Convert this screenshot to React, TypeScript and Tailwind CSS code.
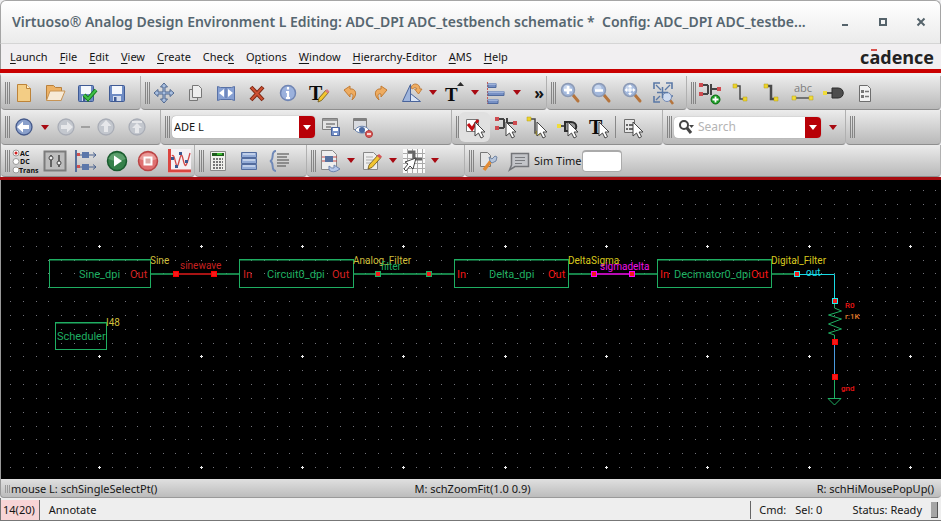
import type { ReactNode } from "react";

const menus = [
  { label: "Launch", key: 0 },
  { label: "File", key: 0 },
  { label: "Edit", key: 0 },
  { label: "View", key: 0 },
  { label: "Create", key: 0 },
  { label: "Check", key: 4 },
  { label: "Options", key: 1 },
  { label: "Window", key: 0 },
  { label: "Hierarchy-Editor", key: 0 },
  { label: "AMS", key: 0 },
  { label: "Help", key: 0 },
];

/* ---------- icon drawings, all on a 24 x 24 grid ---------- */

const Cursor = () => (
  <path d="M12 7v14l3.5-3 2.5 5 2.5-1.3-2.4-4.7H22z" fill="#fff" stroke="#444" strokeWidth="1" />
);

const Lens = ({ children }: { children?: ReactNode }) => (
  <>
    <path d="M15 14l5 6" stroke="#b5743c" strokeWidth="3" strokeLinecap="round" />
    <circle cx="10" cy="9" r="6.5" fill="#a3b8dc" stroke="#8c9ab5" strokeWidth="1.5" />
    <circle cx="9" cy="7.5" r="3.5" fill="#c9d7ee" />
    {children}
  </>
);

const Floppy = () => (
  <>
    <rect x="4.5" y="4.5" width="15" height="16" rx="1" fill="#6f8cc4" stroke="#3f5a94" />
    <rect x="7" y="5" width="10" height="8" fill="#f4f7fc" />
    <rect x="8" y="15" width="8" height="5" fill="#d5deee" />
    <rect x="9" y="16" width="2.5" height="4" fill="#3f5a94" />
  </>
);

const Transistor = () => (
  <>
    <path d="M3 4h7M3 13h7M10 4v9M13 3v11M13 8h8" stroke="#444" strokeWidth="2" fill="none" />
    <path d="M1 2h4v4H1zM1 11h4v4H1zM19 6h4v4h-4z" fill="#cf4b50" />
  </>
);

const Wire = ({ width = 1.5 }: { width?: number }) => (
  <>
    <path d="M6 5h5v13h5" stroke="#4a4a4a" strokeWidth={width} fill="none" />
    <path d="M4 3h4v4H4zM14 16h4v4h-4z" fill="#ecd32d" stroke="#b59c1a" strokeWidth=".5" />
  </>
);

const ListDoc = () => (
  <>
    <path d="M6.5 4.5h8l3 3v13h-11z" fill="#f2f2f2" stroke="#6d6d6d" />
    <path d="M8 9h3v3H8zM8 14h3v3H8z" fill="#777" />
    <path d="M12 10.5h4M12 15.5h4" stroke="#777" strokeWidth="1.5" />
  </>
);

const BigT = ({ x = 3 }: { x?: number }) => (
  <text x={x} y="19" fontSize="20" fontWeight="bold" fontFamily="Liberation Serif, serif" fill="#0a0a0a">
    T
  </text>
);

const Round = ({ pale, children }: { pale?: boolean; children: ReactNode }) => (
  <>
    <circle cx="12" cy="12" r="8" fill={pale ? "#c3c7ce" : "#8aa0cb"} stroke={pale ? "#a9adb6" : "#45598a"} strokeWidth="1.3" />
    {children}
  </>
);

const icons: Record<string, ReactNode> = {
  new: (
    <>
      <path d="M5.5 3.5h9l4 4v13h-13z" fill="#f3cd85" stroke="#bd8338" />
      <path d="M14.5 3.5v4h4" fill="#fff0cb" stroke="#bd8338" />
    </>
  ),
  open: (
    <>
      <path d="M3.5 19V4.5h7l2 2h6V19z" fill="#edb265" stroke="#b9803c" />
      <path d="M7 10h15l-4 9.5H3.5z" fill="#f7ead6" stroke="#c79455" />
    </>
  ),
  check: (
    <>
      <Floppy />
      <path d="M10 14l4 4 8-9" stroke="#167c1c" strokeWidth="4" fill="none" />
      <path d="M10 14l4 4 8-9" stroke="#3fc048" strokeWidth="2" fill="none" />
    </>
  ),
  save: <Floppy />,
  move: (
    <path
      d="M12 2l3.5 4H13v5h5V8.5l4 3.5-4 3.5V13h-5v5h2.5L12 22l-3.5-4H11v-5H6v2.5L2 12l4-3.5V11h5V6H8.5z"
      fill="#a9bfdf"
      stroke="#4f678f"
    />
  ),
  copy: (
    <>
      <path d="M6.5 8.5h8v11h-8z" fill="#ddd" stroke="#777" />
      <path d="M9.5 4.5h6l3 3v9h-9z" fill="#eee" stroke="#777" />
    </>
  ),
  stretch: (
    <>
      <path d="M3.5 5.5l3 1h11l3-1v14l-3-1h-11l-3 1z" fill="#87a0d2" stroke="#5871a6" />
      <path d="M12 7v10" stroke="#5871a6" />
      <path d="M5 12l5-4v8zM19 12l-5-4v8z" fill="#fff" />
    </>
  ),
  delete: (
    <>
      <path d="M6 6l12 13M18 6L6 19" stroke="#7c2510" strokeWidth="4" />
      <path d="M6.5 6.5l11 12M17.5 6.5l-11 12" stroke="#cd5032" strokeWidth="2" />
    </>
  ),
  info: (
    <>
      <circle cx="12" cy="12" r="7.5" fill="#9bb1dc" stroke="#7085b3" strokeWidth="1.5" />
      <path d="M12 6v2.5M10 11h2v6M10 17h4" stroke="#fff" strokeWidth="2.2" fill="none" />
    </>
  ),
  textEdit: (
    <>
      <BigT x={2} />
      <path d="M11 21l1-4 7-8 2.5 2.5-7 8z" fill="#f3c62e" stroke="#6b5314" strokeWidth=".8" />
      <path d="M18 10l2-2 2.5 2.5-2 2z" fill="#d87d80" />
    </>
  ),
  undo: <path d="M6 9l6-4v3c6-1 8 6 2 11 2-5 1-7-2-6v3z" fill="#eeac61" stroke="#c27b32" />,
  redo: <path d="M18 9l-6-4v3c-6-1-8 6-2 11-2-5-1-7 2-6v3z" fill="#eeac61" stroke="#c27b32" />,
  rotate: (
    <>
      <path d="M10.5 3.5v17h-8z" fill="#9fb5dc" stroke="#48639a" />
      <path d="M10.5 12.5l10 8h-10z" fill="#d9e4f5" stroke="#48639a" />
      <path d="M11 7c1-6 9-5 9 1h2l-3.5 5-4-5H17c-1-2-3-2-4 0z" fill="#efad62" stroke="#b97430" strokeWidth=".8" />
    </>
  ),
  textUp: (
    <>
      <text x="3" y="20" fontSize="19" fontWeight="bold" fontFamily="Liberation Serif, serif" fill="#0a0a0a">
        T
      </text>
      <path d="M15 5l3.5-4L22 5z" fill="#2b2b2b" />
    </>
  ),
  align: (
    <>
      <path d="M3.5 1v22" stroke="#c95a55" strokeDasharray="2 1" />
      <path d="M4 2.5h8v4H4zM4 10.5h16v4H4zM4 18.5h10v4H4z" fill="#7790c4" stroke="#4f6a9e" />
      <path d="M4 3h8M4 11h16M4 19h10" stroke="#c6d4ef" />
    </>
  ),
  zoomIn: (
    <Lens>
      <path d="M10 5v8M6 9h8" stroke="#fff" strokeWidth="2.5" />
    </Lens>
  ),
  zoomOut: (
    <Lens>
      <path d="M6 9.5h8" stroke="#fff" strokeWidth="2.5" />
    </Lens>
  ),
  zoomFit: (
    <Lens>
      <path d="M10 3.5l2 2.5h-4zM10 14.5l2-2.5h-4zM4.5 9l2.5-2v4zM15.5 9l-2.5-2v4z" fill="#fff" />
      <path d="M10 5v8M6 9h8" stroke="#fff" />
    </Lens>
  ),
  zoomSel: (
    <>
      <path d="M3 8V2h6M15 2h6v6M3 15v6h6M21 14v2" stroke="#5a78a6" strokeWidth="1.6" fill="none" />
      <path d="M5 4l5 5M19 4l-5 5M5 19l4-4" stroke="#5a78a6" strokeWidth="1.3" />
      <path d="M19 19l3 4" stroke="#b5743c" strokeWidth="2.5" />
      <circle cx="16" cy="16" r="4.5" fill="#d0dcf0" stroke="#7389b3" />
      <path d="M11.5 6v11M6 11.5h11" stroke="#5a78a6" strokeWidth="1.5" />
    </>
  ),
  instance: (
    <>
      <Transistor />
      <circle cx="17.5" cy="18.5" r="4.5" fill="#199b22" stroke="#0c6d14" />
      <path d="M17.5 15.5v6M14.5 18.5h6" stroke="#fff" strokeWidth="1.8" />
    </>
  ),
  wire: <Wire />,
  wideWire: <Wire width={2.5} />,
  label: (
    <>
      <text x="3" y="11" fontSize="11" fontFamily="Open Sans, sans-serif" fill="#7d7d7d">
        abc
      </text>
      <path d="M4 17h16" stroke="#555" strokeWidth="1.5" />
      <path d="M1 15h4v4H1zM18 15h4v4h-4z" fill="#f0dc3a" stroke="#b59c1a" strokeWidth=".5" />
    </>
  ),
  pin: (
    <>
      <path d="M4 12h8" stroke="#555" strokeWidth="2" />
      <path d="M10 7h6c7 0 7 10 0 10h-6z" fill="#4d4d4d" stroke="#2c2c2c" />
      <path d="M1 10h4v4H1z" fill="#f0dc3a" />
    </>
  ),
  list: <ListDoc />,
  back: (
    <Round>
      <path d="M5 12l6-5.5v3.5h6v4h-6v3.5z" fill="#fff" />
    </Round>
  ),
  forward: (
    <Round pale>
      <path d="M19 12l-6-5.5v3.5H7v4h6v3.5z" fill="#e6e7ea" />
    </Round>
  ),
  up: (
    <Round pale>
      <path d="M12 5l5.5 6H14v6h-4v-6H6.5z" fill="#e6e7ea" />
    </Round>
  ),
  top: (
    <Round pale>
      <path d="M7 6h10v2H7zM12 8l5 5h-3v5h-4v-5H7z" fill="#e6e7ea" />
    </Round>
  ),
  saveState: (
    <>
      <path d="M3.5 3.5h15v11h-15z" fill="#e3e3e3" stroke="#808080" />
      <path d="M4 5h14M7 9h9M7 12h5" stroke="#808080" strokeWidth="1.5" />
      <path d="M12.5 12.5h8v8h-8z" fill="#7893ca" stroke="#4b659c" />
      <path d="M14 13h5v3h-5zM15 18h3v2h-3z" fill="#fff" />
    </>
  ),
  viewState: (
    <>
      <path d="M3.5 3.5h13v11h-13z" fill="#d9dbe0" stroke="#808080" />
      <path d="M4 5h12" stroke="#808080" strokeWidth="2" />
      <path d="M5 15c3-5 11-5 14 0-3 4-11 4-14 0z" fill="#fff" stroke="#6680ad" />
      <circle cx="12" cy="15" r="3" fill="#4b6ba3" />
      <circle cx="19" cy="19" r="3.5" fill="#da5856" stroke="#b13b3b" />
      <path d="M17 19h4" stroke="#fff" strokeWidth="1.5" />
    </>
  ),
  select: (
    <>
      <path d="M3.5 4.5h12v12h-12z" fill="#fff" stroke="#777" />
      <path d="M5 9l4 5 6-9" stroke="#c40d12" strokeWidth="3" fill="none" />
      <Cursor />
    </>
  ),
  selInstance: (
    <>
      <Transistor />
      <Cursor />
    </>
  ),
  selWire: (
    <>
      <path d="M4 4h6v14h6" stroke="#4a4a4a" strokeWidth="1.5" fill="none" />
      <path d="M2 2h4v4H2zM11 16h4v4h-4z" fill="#ecd32d" stroke="#b59c1a" strokeWidth=".5" />
      <Cursor />
    </>
  ),
  selPin: (
    <>
      <path d="M4 11h6" stroke="#555" strokeWidth="2" />
      <path d="M9 7h6c7 0 7 9 0 9H9z" fill="#9a9a9a" stroke="#2c2c2c" strokeWidth="2" />
      <path d="M1 9h4v4H1z" fill="#f0dc3a" />
      <Cursor />
    </>
  ),
  selText: (
    <>
      <BigT x={2} />
      <Cursor />
    </>
  ),
  selList: (
    <>
      <path d="M3.5 4.5h10v13h-10z" fill="#e7e7e7" stroke="#6d6d6d" />
      <path d="M5 9h2v2H5zM5 13h2v2H5zM8 9h4v2H8zM8 13h4v2H8z" fill="#666" />
      <Cursor />
    </>
  ),
  analyses: (
    <>
      <circle cx="4" cy="4" r="3" fill="#fff" stroke="#999" />
      <circle cx="4" cy="4" r="1.5" fill="#d01e1e" />
      <circle cx="4" cy="12.5" r="3" fill="#fff" stroke="#999" />
      <circle cx="4" cy="21" r="3" fill="#fff" stroke="#999" />
      <g fontSize="7" fontWeight="bold" fontFamily="Open Sans, sans-serif" fill="#111">
        <text x="8" y="6.5">AC</text>
        <text x="8" y="15">DC</text>
        <text x="7" y="23.5">Trans</text>
      </g>
    </>
  ),
  variables: (
    <>
      <path d="M1.5 2.5h21v19h-21z" fill="#bdbdbd" stroke="#7c7c7c" strokeWidth="2" />
      <path d="M8 6v12M16 6v12" stroke="#444" strokeWidth="1.5" />
      <circle cx="8" cy="9" r="2" fill="#eee" stroke="#444" />
      <circle cx="16" cy="14" r="2" fill="#eee" stroke="#444" />
    </>
  ),
  outputs: (
    <>
      <path d="M2 1v22" stroke="#566f9b" strokeWidth="2" />
      <path d="M2 6h20M2 18h20M19 3.5l3 2.5-3 2.5M19 15.5l3 2.5-3 2.5" stroke="#49618e" fill="none" />
      <path d="M8 3h7v6H8zM8 15h7v6H8z" fill="#5b77aa" />
      <path d="M3 4h3v3H3zM3 16h3v3H3z" fill="#cf4f4f" />
    </>
  ),
  run: (
    <>
      <circle cx="12" cy="12" r="9.5" fill="#358049" stroke="#195b2e" strokeWidth="1.5" />
      <path d="M3.5 10a9 9 0 0117 0q-8 4-17 0z" fill="#5c9f6d" />
      <path d="M9 6.5l8 5.5-8 5.5z" fill="#fff" />
    </>
  ),
  stop: (
    <>
      <circle cx="12" cy="12" r="9.5" fill="#df7070" stroke="#ba4444" strokeWidth="1.5" />
      <path d="M3.5 10a9 9 0 0117 0q-8 4-17 0z" fill="#ea9a98" />
      <path d="M8.5 8.5h7v7h-7z" fill="#dcaaa6" stroke="#fff" strokeWidth="2" />
    </>
  ),
  plot: (
    <>
      <path d="M1 0h23v24H1z" fill="#f5f1f5" />
      <path d="M2.5 0v22H24" stroke="#db4540" strokeWidth="3" fill="none" />
      <path d="M5 7c3-4 4 15 6 9s3-15 5-6 3 10 7-6" stroke="#d14a4a" fill="none" strokeWidth="1.3" />
      <path d="M4 8h3v3H4zM8 16h3v3H8zM12 3h3v3h-3zM18 11h3v3h-3z" fill="#3a5790" />
    </>
  ),
  calculator: (
    <>
      <path d="M4.5 2.5h15v19h-15z" fill="#f0f0ec" stroke="#888" />
      <path d="M6 4h12v3H6z" fill="#1d5b1c" />
      <path d="M11 5h5" stroke="#49da39" strokeWidth="1.5" />
      <path d="M7 10h10M7 13h10M7 16h10M7 19h10" stroke="#777" strokeWidth="2" strokeDasharray="2 1" />
    </>
  ),
  database: (
    <>
      <path d="M4.5 3.5h15v5h-15zM4.5 9.5h15v5h-15zM4.5 15.5h15v5h-15z" fill="#93abd6" stroke="#536c9e" />
      <path d="M6 5h12M6 11h12M6 17h12" stroke="#d0dcf0" strokeWidth="1.5" />
    </>
  ),
  braces: (
    <>
      <path d="M8 2c-6 0-1 9-6 10 5 1 0 10 6 10" stroke="#7089b8" strokeWidth="2" fill="none" />
      <path d="M9 5h12M9 8h10M9 11h12M9 14h12M9 17h9" stroke="#777" strokeWidth="1.5" />
    </>
  ),
  netlist: (
    <>
      <path d="M3.5 1.5h11l4 4v15h-15z" fill="#eee" stroke="#888" />
      <path d="M4 8h15M4 12h15" stroke="#c14a4a" />
      <path d="M7 7h8v6H7z" fill="#56719f" />
      <path d="M11 17q3 3 5 2v-3l6 4q-7 5-11 1z" fill="#b4c6e8" stroke="#6d83ad" />
    </>
  ),
  edit: (
    <>
      <path d="M3.5 3.5h10l4 4v13h-14z" fill="#eee" stroke="#888" />
      <path d="M6 8h7M6 11h8M6 14h5" stroke="#aaa" />
      <path d="M8 20l1-4 9-10 3 2.5-9 10z" fill="#f1c532" stroke="#6a5217" strokeWidth=".8" />
      <path d="M17 7l2-2 3 2.5-2 2z" fill="#d6555a" />
    </>
  ),
  probe: (
    <>
      <path d="M1 0h22v24H1z" fill="#fafafa" />
      <path d="M5.5 0v24M10.5 0v24M15.5 0v24M20.5 0v24M1 4.5h22M1 9.5h22M1 14.5h22M1 19.5h22" stroke="#aaa" />
      <path d="M6 3h6v7h8" stroke="#666" strokeWidth="3" fill="none" />
      <path d="M14 9L3 13l3 2-4 5 2 2 4-5 3 3z" fill="#fff" stroke="#444" />
    </>
  ),
  setup: (
    <>
      <path d="M4.5 3.5h7l3 3v11h-10z" fill="#e5e5e5" stroke="#777" />
      <path d="M8 21l7-9" stroke="#e28b34" strokeWidth="3.5" />
      <path d="M14 12l-1-4 3 2 3-3 2 1-1 4-4 2z" fill="#b7c6dc" stroke="#7186a5" />
    </>
  ),
  message: (
    <>
      <path d="M4.5 4.5h17v13H8L2.5 21l2-5z" fill="#c3c5c9" stroke="#737579" strokeWidth="1.5" />
      <path d="M8 8.5h10M8 11.5h10M8 14.5h7" stroke="#7a7c80" />
    </>
  ),
};

function Tool({ name, active }: { name: string; active?: boolean }) {
  return (
    <button
      type="button"
      aria-label={name}
      className={`flex h-[30px] w-[31px] shrink-0 items-center justify-center rounded-md ${active ? "bg-[#e0e0e0]" : ""}`}
    >
      <svg viewBox="0 0 24 24" className="h-6 w-6 overflow-visible">
        {icons[name]}
      </svg>
    </button>
  );
}

function Drop() {
  return (
    <button type="button" aria-label="More" className="flex h-[30px] w-[11px] shrink-0 items-center justify-center">
      <svg viewBox="0 0 8 5" className="h-[5px] w-2">
        <path d="M0 0h8L4 5z" fill="#a80a12" />
      </svg>
    </button>
  );
}

function Group({ className = "", children }: { className?: string; children?: ReactNode }) {
  return (
    <div
      className={`flex items-center rounded-b border-r border-b border-[#8e8e8e] border-r-[#b0b0b0] bg-linear-to-b from-[#ececec] to-[#b9b9b9] pl-1 ${className}`}
    >
      <span className="-mr-0.5 flex h-[22px] w-[5px] shrink-0 justify-between">
        <i className="w-px bg-[#858585]" />
        <i className="w-px bg-[#858585]" />
        <i className="w-px bg-[#858585]" />
      </span>
      {children}
    </div>
  );
}

/* ---------- schematic ---------- */

const GREEN = "#1fae62";

const gridX = Array.from({ length: 200 }, (_, i) => ({ at: Math.round(-2.2 + i * 12.67), major: i % 8 === 0 }));
const gridY = Array.from({ length: 80 }, (_, i) => ({ at: Math.round(-45 + i * 13.84), major: i % 8 === 0 }));

const dots = gridX.flatMap((x) => gridY.map((y) => `M${x.at} ${y.at}h1v1h-1z`)).join("");
const majorDots = gridX
  .filter((x) => x.major)
  .flatMap((x) => gridY.filter((y) => y.major).map((y) => `M${x.at - 1} ${y.at}h3v1h-3zM${x.at} ${y.at - 1}h1v3h-1z`))
  .join("");

const blocks = [
  { x: 49, y: 79, w: 101, h: 28 },
  { x: 239, y: 79, w: 114, h: 28 },
  { x: 454, y: 79, w: 114, h: 28 },
  { x: 657, y: 79, w: 114, h: 28 },
  { x: 55, y: 142, w: 51, h: 27 },
];

const labels = [
  { t: "Sine_dpi", x: 79, y: 98, c: GREEN },
  { t: "Circuit0_dpi", x: 267, y: 98, c: GREEN },
  { t: "Delta_dpi", x: 489, y: 98, c: GREEN },
  { t: "Decimator0_dpi", x: 674, y: 98, c: GREEN },
  { t: "Scheduler", x: 57, y: 160, c: GREEN },
  { t: "Out", x: 130, y: 98, c: "#d42020" },
  { t: "Out", x: 332, y: 98, c: "#d42020" },
  { t: "Out", x: 548, y: 98, c: "#f01515" },
  { t: "Out", x: 751, y: 98, c: "#f01515" },
  { t: "In", x: 243, y: 98, c: "#d42020" },
  { t: "In", x: 457, y: 98, c: "#f01515" },
  { t: "In", x: 660, y: 98, c: "#f01515" },
];

const netLabels = [
  { t: "Sine", x: 150, y: 84, c: "#d0bf3c" },
  { t: "Analog_Filter", x: 353, y: 84, c: "#d0bf3c" },
  { t: "DeltaSigma", x: 568, y: 84, c: "#d8c81c" },
  { t: "Digital_Filter", x: 771, y: 84, c: "#d8c81c" },
  { t: "I48", x: 106, y: 146, c: "#d0bf3c" },
  { t: "sinewave", x: 180, y: 89, c: "#c82020" },
  { t: "filter", x: 381, y: 90, c: GREEN },
  { t: "sigmadelta", x: 600, y: 90, c: "#f012e8" },
  { t: "out", x: 806, y: 96, c: "#18dbe4" },
];

const partLabels = [
  { t: "R0", x: 845, y: 128, c: "#f01515" },
  { t: "r:1K", x: 845, y: 139, c: "#e07b28" },
  { t: "gnd", x: 841, y: 211, c: "#f01515" },
];

const pins = [
  { x: 173, y: 91, c: "#f00" },
  { x: 211, y: 91, c: "#f00" },
  { x: 375, y: 91, c: GREEN },
  { x: 426, y: 91, c: GREEN },
  { x: 591, y: 91, c: "#f0f" },
  { x: 629, y: 91, c: "#f0f" },
  { x: 794, y: 91, c: "#2ee" },
  { x: 832, y: 118, c: "#2ee" },
  { x: 832, y: 159, c: "#f00" },
  { x: 832, y: 194, c: "#f00" },
];

function Schematic() {
  return (
    <svg className="block min-h-[299px] w-full flex-1 bg-black" fontFamily="Roboto, sans-serif">
      <path d={dots} fill="#74747c" />
      <path d={majorDots} fill="#ededed" />
      <path d="M.5 0v2000" stroke="#999" />
      <g fill="none" stroke={GREEN}>
        {blocks.map((b) => (
          <g key={b.x}>
            <rect x={b.x + 0.5} y={b.y + 0.5} width={b.w} height={b.h} />
            <path d={`M${b.x} ${b.y + 1.5}h${b.w}`} opacity=".5" />
          </g>
        ))}
        <path d="M150 94h23M217 94h22M353 94h101M568 94h23M635 94h22M771 94h23" strokeWidth="2" opacity=".75" />
        <path d="M834.5 124v4l7 3-13 4 13 4-13 5 13 5-13 4 6 2v4M834.5 200v18M828 218.5h13l-6.5 6.5z" />
      </g>
      <path d="M179 94h32" stroke="#a81414" strokeWidth="2" />
      <path d="M597 94h32" stroke="#b80cb4" strokeWidth="2" />
      <path d="M800 94.5h34.5v24" stroke="#18dbe4" fill="none" />
      <path d="M834.5 165v29" stroke="#4a9ade" />
      {pins.map((p) => (
        <g key={`${p.x}-${p.y}`}>
          <rect x={p.x} y={p.y} width="6" height="6" fill={p.c} />
          <rect x={p.x + 1} y={p.y + 1} width="4" height="4" fill="#f21a1a" />
        </g>
      ))}
      <g fontSize="11">
        {labels.map((l) => (
          <text key={`${l.t}${l.x}`} x={l.x} y={l.y} fill={l.c}>
            {l.t}
          </text>
        ))}
      </g>
      <g fontSize="10">
        {netLabels.map((l) => (
          <text key={l.t} x={l.x} y={l.y} fill={l.c}>
            {l.t}
          </text>
        ))}
      </g>
      <g fontSize="8" fontWeight="500">
        {partLabels.map((l) => (
          <text key={l.t} x={l.x} y={l.y} fill={l.c}>
            {l.t}
          </text>
        ))}
      </g>
    </svg>
  );
}

function TitleBar() {
  return (
    <header className="flex h-11 items-center rounded-t-md border border-[#a5a5a5] border-b-[#d5d5d5] bg-linear-to-b from-white to-[#ebebeb] pl-[11px] text-[#566670]">
      <h1 className="flex-1 text-[14px] font-semibold whitespace-pre">
        Virtuoso® Analog Design Environment L Editing: ADC_DPI ADC_testbench schematic *{"  "}Config: ADC_DPI ADC_testbe...
      </h1>
      <div className="flex">
        <button type="button" aria-label="Minimize" className="flex h-8 w-[38px] items-center justify-center">
          <svg viewBox="0 0 10 10" className="h-[10px] w-[10px]">
            <path d="M2 8h6" stroke="#55636b" strokeWidth="2" />
          </svg>
        </button>
        <button type="button" aria-label="Maximize" className="flex h-8 w-[38px] items-center justify-center">
          <svg viewBox="0 0 10 10" className="h-[10px] w-[10px]">
            <path d="M2 2h6v6H2z" fill="none" stroke="#55636b" strokeWidth="2" />
          </svg>
        </button>
        <button type="button" aria-label="Close" className="flex h-8 w-[38px] items-center justify-center">
          <svg viewBox="0 0 10 10" className="h-[10px] w-[10px]">
            <path d="M1.5 1.5l7 7M8.5 1.5l-7 7" stroke="#55636b" strokeWidth="2" />
          </svg>
        </button>
      </div>
    </header>
  );
}

export default function App() {
  return (
    <div className="flex min-h-screen flex-col bg-[#eeeef0] font-['Noto_Sans','Open_Sans',sans-serif] text-[11px] leading-4 text-[#151515]">
      <TitleBar />

      <nav className="flex h-[25px] items-center border-l border-[#999] bg-[#f1eff1] pr-[7px] pl-[9px]">
        <div className="flex flex-1 gap-3">
          {menus.map((m) => (
            <button key={m.label} type="button" className="whitespace-nowrap">
              {m.label.slice(0, m.key)}
              <span className="underline underline-offset-2">{m.label[m.key]}</span>
              {m.label.slice(m.key + 1)}
            </button>
          ))}
        </div>
        <span className="flex font-['Open_Sans',sans-serif] text-[18px] font-bold text-[#222]">
          c
          <span className="relative">
            a<i className="absolute top-0 left-0.5 h-0.5 w-1.5 bg-[#d8504c]" />
          </span>
          dence
        </span>
      </nav>
      <div className="h-1 bg-[#c90000]" />

      <div className="flex h-[37px] border-t-[3px] border-l border-t-[#f0f0f0] border-l-[#999]">
        <Group className="w-[140px]">
          <Tool name="new" />
          <Tool name="open" />
          <Tool name="check" />
          <Tool name="save" />
        </Group>
        <Group className="w-[406px]">
          <Tool name="move" />
          <Tool name="copy" />
          <Tool name="stretch" />
          <Tool name="delete" />
          <Tool name="info" />
          <Tool name="textEdit" />
          <Tool name="undo" />
          <Tool name="redo" />
          <Tool name="rotate" />
          <Drop />
          <Tool name="textUp" />
          <Drop />
          <Tool name="align" />
          <Drop />
          <button type="button" aria-label="Show more tools" className="ml-auto pr-0.5 text-[16px] font-bold">
            »
          </button>
        </Group>
        <Group className="w-[140px]">
          <Tool name="zoomIn" />
          <Tool name="zoomOut" />
          <Tool name="zoomFit" />
          <Tool name="zoomSel" />
        </Group>
        <Group className="flex-1">
          <Tool name="instance" />
          <Tool name="wire" />
          <Tool name="wideWire" />
          <Tool name="label" />
          <Tool name="pin" />
          <Tool name="list" />
        </Group>
      </div>

      <div className="flex h-[35px] border-l border-[#999]">
        <Group className="w-[160px]">
          <Tool name="back" />
          <Drop />
          <Tool name="forward" />
          <span className="h-0.5 w-[9px] bg-[#a0a0a0]" />
          <Tool name="up" />
          <Tool name="top" />
        </Group>
        <Group className="w-[291px]">
          <div className="ml-1 flex h-[22px] w-[143px] overflow-hidden rounded bg-white shadow-[0_0_1px_#777]">
            <select aria-label="Workspace" className="min-w-0 flex-1 appearance-none pl-0.5 outline-none">
              <option>ADE L</option>
            </select>
            <span className="flex w-4 items-center justify-center bg-[#b80007]">
              <svg viewBox="0 0 8 5" className="h-[5px] w-2">
                <path d="M0 0h8L4 5z" fill="#fff" />
              </svg>
            </span>
          </div>
          <Tool name="saveState" />
          <Tool name="viewState" />
        </Group>
        <Group className="w-[211px]">
          <Tool name="select" active />
          <Tool name="selInstance" />
          <Tool name="selWire" />
          <Tool name="selPin" />
          <Tool name="selText" />
          <span className="mx-px h-[22px] w-px bg-[#888]" />
          <Tool name="selList" />
        </Group>
        <Group className="w-[183px]">
          <div className="ml-1 flex h-[21px] w-[147px] items-center overflow-hidden rounded bg-white shadow-[0_0_1px_#777]">
            <svg viewBox="0 0 20 16" className="ml-1 h-4 w-5 shrink-0">
              <circle cx="6" cy="6" r="4" fill="none" stroke="#444" strokeWidth="2" />
              <path d="M9 9l4 5" stroke="#444" strokeWidth="3" />
              <path d="M11 6h5l-2.5 3z" fill="#444" />
            </svg>
            <input
              aria-label="Search"
              placeholder="Search"
              className="w-0 min-w-0 flex-1 text-[12px] outline-none placeholder:text-[#b4b4b4]"
            />
            <button type="button" aria-label="Search options" className="flex h-full w-4 items-center justify-center bg-[#b80007]">
              <svg viewBox="0 0 8 5" className="h-[5px] w-2">
                <path d="M0 0h8L4 5z" fill="#fff" />
              </svg>
            </button>
          </div>
          <span className="w-1.5" />
          <Drop />
        </Group>
        <Group className="flex-1" />
      </div>

      <div className="flex h-8 border-l border-[#999]">
        <Group className="w-[194px]">
          <Tool name="analyses" />
          <Tool name="variables" />
          <Tool name="outputs" />
          <Tool name="run" />
          <Tool name="stop" />
          <Tool name="plot" />
        </Group>
        <Group className="w-[112px]">
          <Tool name="calculator" />
          <Tool name="database" />
          <Tool name="braces" />
        </Group>
        <Group className="w-[158px]">
          <Tool name="netlist" />
          <Drop />
          <Tool name="edit" />
          <Drop />
          <Tool name="probe" />
          <Drop />
        </Group>
        <Group className="flex-1">
          <Tool name="setup" />
          <Tool name="message" />
          <label htmlFor="simTime" className="whitespace-nowrap">
            Sim Time
          </label>
          <input id="simTime" className="ml-px h-[22px] w-10 rounded border border-t-2 border-[#aaa] bg-white outline-none" />
        </Group>
      </div>
      <div className="h-[3px] bg-[#a80c10]" />

      <Schematic />

      <div className="flex h-[19px] items-center rounded-b border-b border-l border-[#999] bg-linear-to-b from-[#e0e0e0] to-[#bcbcbc] pt-0.5 pr-[7px] pl-1">
        <span className="mr-px flex h-2 w-[5px] justify-between">
          <i className="w-px bg-[#999]" />
          <i className="w-px bg-[#999]" />
          <i className="w-px bg-[#999]" />
        </span>
        <span className="flex-1">mouse L: schSingleSelectPt()</span>
        <span>M: schZoomFit(1.0 0.9)</span>
        <span className="flex-1 text-right">R: schHiMousePopUp()</span>
      </div>

      <footer className="flex h-[23px] items-center border-b border-l border-[#777] bg-[#eeeeee] pt-0.5 pr-[3px]">
        <span className="flex h-5 items-center border-r border-[#666] bg-[#f8d4d6] pr-1 pl-0.5">14(20)</span>
        <span className="flex-1 pl-[9px]">Annotate</span>
        <span className="flex h-[18px] items-center border-l border-[#666] pl-2">Cmd:</span>
        <span className="pl-[9px]">Sel: 0</span>
        <span className="pr-[9px] pl-[30px]">Status: Ready</span>
        <span className="h-4 w-[7px] border-r border-b border-[#555] bg-[#a5a5a5]" />
      </footer>
    </div>
  );
}
